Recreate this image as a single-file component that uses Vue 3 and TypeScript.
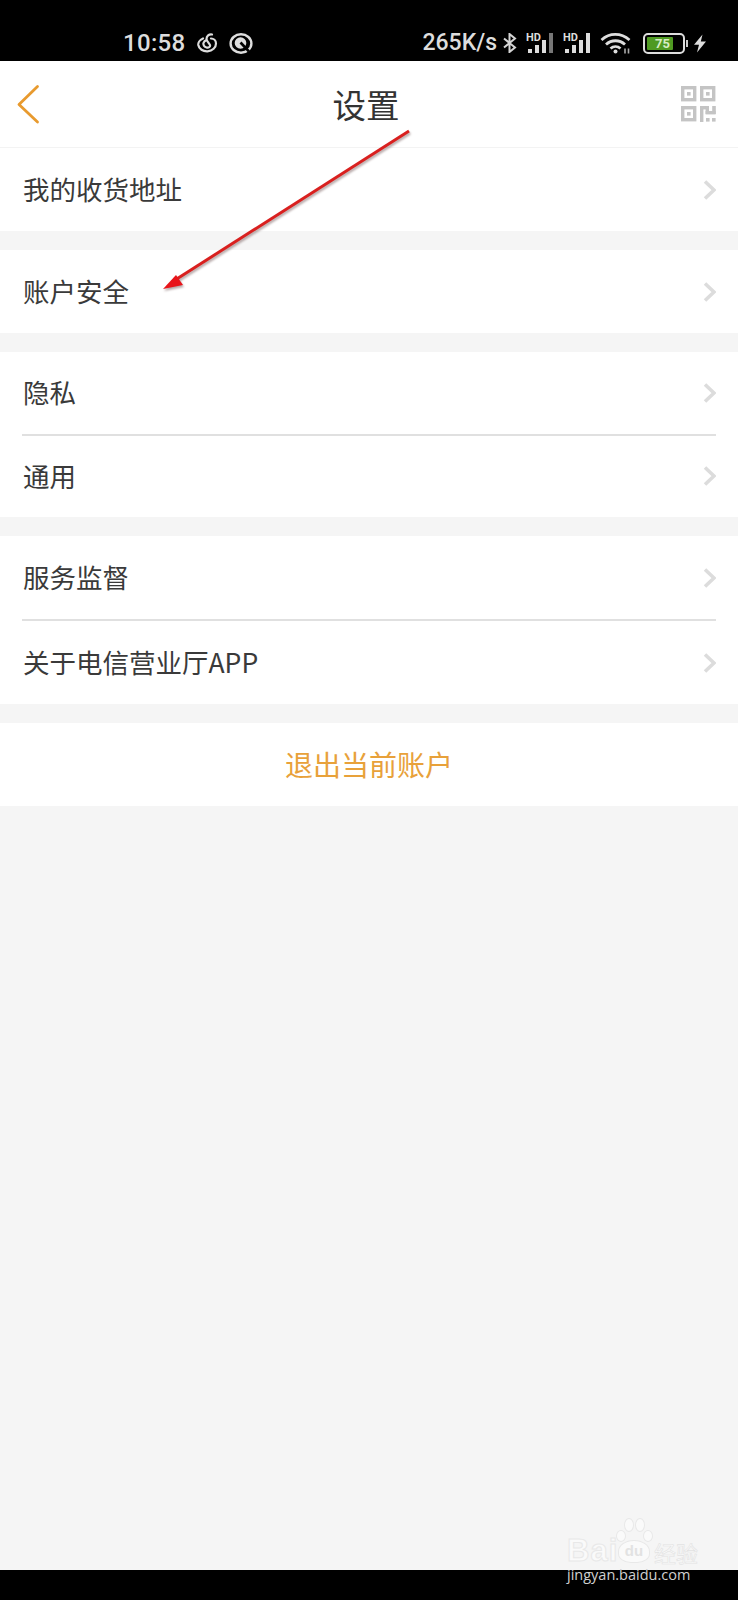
<script setup lang="ts">
interface Section { height: number; rows: string[] }
const sections: Section[] = [
  { height: 83, rows: ['我的收货地址'] },
  { height: 83, rows: ['账户安全'] },
  { height: 165, rows: ['隐私', '通用'] },
  { height: 168, rows: ['服务监督', '关于电信营业厅APP'] },
]
const bars = [
  { x: 0, h: 4 },
  { x: 7, h: 8 },
  { x: 14, h: 13 },
  { x: 21, h: 20 },
]
</script>

<template>
  <div class="page">
    <header class="status">
      <div class="status-left">
        <span class="time">10:58</span>
        <svg class="ne" width="21" height="20" viewBox="0 0 21 20" fill="none" stroke="#ddd" stroke-width="2.2" stroke-linecap="round">
          <path d="M6 5.5C2.5 7 1 10 1.3 12C2 16 6 18.5 10.5 18.3C15.5 18 19 14.5 19 10.5C19 7.5 16.5 5.5 14 5.5" />
          <path d="M15 1.5C12 1 9.5 3 9.5 6C9.5 8 12.5 10.5 13 12C13.5 14 11.5 15 9.5 14.5C7.5 14 6 12 6.5 10C7 8.5 8.5 7.5 9.5 7" />
        </svg>
        <svg class="qi" width="24" height="21" viewBox="0 0 24 21">
          <ellipse cx="12" cy="10.5" rx="10.4" ry="9.2" fill="none" stroke="#ddd" stroke-width="2.4" />
          <circle cx="11.5" cy="10" r="5.8" fill="#ddd" />
          <path d="M11.5 9.5L20 18.5" stroke="#000" stroke-width="2.6" />
        </svg>
      </div>
      <div class="status-right">
        <span class="speed">265K/s</span>
        <svg class="bt" width="15" height="20" viewBox="0 0 15 20" fill="none" stroke="#d4d4d4" stroke-width="2">
          <path d="M2 5.5L13 14.5L7.5 19V1L13 5.5L2 14.5" />
        </svg>
        <div class="sig">
          <span class="hd">HD</span>
          <svg width="28" height="20" viewBox="0 0 28 20">
            <rect v-for="b in bars" :key="b.x" :x="b.x + 2" :y="20 - b.h" width="4" :height="b.h" :fill="b.x === 21 ? '#777' : '#ddd'" />
          </svg>
        </div>
        <div class="sig">
          <span class="hd">HD</span>
          <svg width="28" height="20" viewBox="0 0 28 20">
            <rect v-for="b in bars" :key="b.x" :x="b.x + 2" :y="20 - b.h" width="4" :height="b.h" fill="#ddd" />
          </svg>
        </div>
        <svg class="wifi" width="32" height="22" viewBox="0 0 32 22" fill="none" stroke="#ddd" stroke-width="2.8">
          <path d="M1.5 8C9.5 0.6 21 0.6 29.5 8" />
          <path d="M6 12.5C11.5 7.5 19.5 7.5 25 12.5" />
          <path d="M10.5 16.5C13.5 14 17.5 14 20.5 16.5" />
          <circle cx="15.5" cy="19.5" r="2" fill="#ddd" stroke="none" />
          <path d="M25 16.5V21.5M28.5 16.5V21.5" stroke="#aaa" stroke-width="1.6" />
        </svg>
        <div class="battery">
          <div class="cell"><span>75</span></div>
        </div>
        <i class="nub"></i>
        <svg class="bolt" width="14" height="19" viewBox="0 0 14 19">
          <path d="M9.5 0.5L1 10.8H6L4 18.5L13 7.6H7.8Z" fill="#ddd" />
        </svg>
      </div>
    </header>

    <nav class="topbar">
      <svg class="back" width="24" height="40" viewBox="0 0 24 40" fill="none" stroke="#e89a2e" stroke-width="2.8" stroke-linecap="round" stroke-linejoin="round">
        <path d="M21.5 2.5L3 20.5L21.5 38" />
      </svg>
      <h1 class="title">设置</h1>
      <svg class="qr" width="35" height="36" viewBox="0 0 35 36" fill="none" stroke="#c4c4c4" stroke-width="3.4">
        <rect x="1.7" y="1.7" width="12" height="12" />
        <rect x="20.7" y="1.7" width="12" height="12" />
        <rect x="1.7" y="21.7" width="12" height="12" />
        <g fill="#c4c4c4" stroke="none">
          <rect x="6" y="6" width="3.6" height="3.6" />
          <rect x="25" y="6" width="3.6" height="3.6" />
          <rect x="6" y="26" width="3.6" height="3.6" />
          <rect x="19" y="20" width="3.4" height="16" />
          <rect x="19" y="20" width="9" height="3.4" />
          <rect x="24.6" y="20" width="3.4" height="8" />
          <rect x="24.6" y="25" width="10" height="3.4" />
          <rect x="31.2" y="20" width="3.6" height="8" />
          <rect x="25" y="32" width="3.6" height="3.6" />
          <rect x="31" y="32" width="3.6" height="3.6" />
        </g>
      </svg>
    </nav>

    <main class="list">
      <section v-for="(s, i) in sections" :key="i" class="group" :style="{ height: s.height + 'px' }">
        <div v-for="r in s.rows" :key="r" class="row">
          <span class="label">{{ r }}</span>
          <svg width="14" height="20" viewBox="0 0 14 20" fill="none" stroke="#dcdcdc" stroke-width="3.6">
            <path d="M3 1.5L12 10L3 18.5" />
          </svg>
        </div>
      </section>
      <section class="group logout"><span class="label">退出当前账户</span></section>
    </main>

    <footer class="bottom"></footer>

    <svg class="arrow" width="738" height="320" viewBox="0 0 738 320">
      <path d="M409 131L172 282" stroke="#d9201f" stroke-width="3" fill="none" />
      <path d="M163 289L176 275L183 285Z" fill="#e8141a" />
    </svg>

    <div class="mark">
      <span class="bai">Bai</span>
      <span class="paw">
        <i class="toe t1"></i><i class="toe t2"></i><i class="toe t3"></i><i class="toe t4"></i>
        <b>du</b>
      </span>
      <span class="jy">经验</span>
      <span class="url">jingyan.baidu.com</span>
    </div>
  </div>
</template>

<style>
html, body { margin: 0; background: #f5f5f5; }
</style>

<style scoped>
.page {
  position: relative;
  width: 738px;
  height: 1600px;
  display: flex;
  flex-direction: column;
  background: #f5f5f5;
  font-family: "Noto Sans CJK SC", "Noto Sans", sans-serif;
  overflow: hidden;
}
.status {
  flex: none;
  height: 61px;
  box-sizing: border-box;
  padding: 31px 31px 0 123px;
  background: #000;
  display: flex;
  justify-content: space-between;
  align-items: flex-start;
  color: #ddd;
}
.status-left, .status-right { display: flex; align-items: center; height: 24px; }
.time { font: 500 24px/24px Roboto, sans-serif; width: 74px; letter-spacing: 0.3px; }
.ne { margin-right: 11px; }
.speed { font: 500 23px/24px Roboto, sans-serif; margin-right: 5px; }
.bt { margin-right: 9px; }
.sig { position: relative; width: 28px; height: 20px; margin-right: 9px; }
.sig svg { display: block; }
.hd {
  position: absolute;
  left: 0;
  top: 0;
  font: 700 11px/10px Roboto, sans-serif;
  color: #ddd;
}
.wifi { margin-right: 11px; }
.battery {
  width: 42px;
  height: 21px;
  box-sizing: border-box;
  border: 2px solid #ddd;
  border-radius: 5px;
  padding: 2px;
}
.cell {
  width: 26px;
  height: 13px;
  background: #4f9a22;
  border-radius: 1px;
  display: flex;
  align-items: center;
  justify-content: flex-end;
  color: #d6ecc4;
  font: 700 13px/13px Roboto, sans-serif;
  padding-right: 3px;
  box-sizing: border-box;
}
.nub { width: 2px; height: 7px; background: #ccc; margin: 0 5px 0 1px; }
.topbar {
  flex: none;
  height: 87px;
  box-sizing: border-box;
  padding: 0 22px 0 16px;
  background: #fff;
  border-bottom: 1px solid #f3f3f3;
  display: grid;
  grid-template-columns: 1fr auto 1fr;
  align-items: center;
}
.qr { justify-self: end; }
.title {
  margin: 0;
  font-size: 33.5px;
  font-weight: 400;
  color: #333;
  line-height: 40px;
}
.list { flex: 1; display: flex; flex-direction: column; gap: 19px; }
.group { background: #fff; display: flex; flex-direction: column; }
.row {
  flex: 1;
  margin: 0 22px;
  padding-left: 1px;
  display: flex;
  align-items: center;
  justify-content: space-between;
  font-size: 26.5px;
  color: #3a3a3a;
}
.label { margin-bottom: 2px; }
.row + .row { border-top: 2px solid #e0e0e0; }
.logout {
  height: 83px;
  flex-direction: row;
  align-items: center;
  justify-content: center;
  font-size: 28px;
  color: #e8a13a;
}
.bottom { flex: none; height: 30px; background: #000; }
.arrow {
  position: absolute;
  left: 0;
  top: 0;
  filter: drop-shadow(1px 2px 1px rgba(90, 60, 60, 0.45));
  pointer-events: none;
}
.mark {
  position: absolute;
  left: 567px;
  top: 1516px;
  width: 140px;
  height: 72px;
}
.bai {
  position: absolute;
  left: 0;
  top: 20px;
  font: 700 31px/30px "Liberation Sans", sans-serif;
  color: #fafafa;
  -webkit-text-stroke: 1px #e8e8e8;
  letter-spacing: 1px;
}
.paw { position: absolute; left: 46px; top: 0; width: 40px; height: 48px; }
.toe { position: absolute; background: #fafafa; border: 1px solid #e8e8e8; border-radius: 50%; }
.t1 { left: 3px; top: 14px; width: 8px; height: 10px; }
.t2 { left: 11px; top: 2px; width: 8px; height: 12px; }
.t3 { left: 22px; top: 2px; width: 8px; height: 12px; }
.t4 { left: 30px; top: 14px; width: 8px; height: 10px; }
.paw b {
  position: absolute;
  left: 5px;
  top: 24px;
  width: 30px;
  height: 21px;
  background: #fafafa;
  border: 1px solid #e8e8e8;
  border-radius: 50% 50% 40% 40%;
  font: 700 15px/19px "Liberation Sans", sans-serif;
  color: #e2e2e2;
  text-align: center;
}
.jy {
  position: absolute;
  left: 87px;
  top: 23px;
  font-size: 22px;
  line-height: 26px;
  color: #fafafa;
  -webkit-text-stroke: 0.6px #e2e2e2;
}
.url {
  position: absolute;
  left: 0;
  top: 50px;
  font: 400 14.5px/18px "Open Sans", sans-serif;
  color: #d0d0d0;
  white-space: nowrap;
}
</style>
